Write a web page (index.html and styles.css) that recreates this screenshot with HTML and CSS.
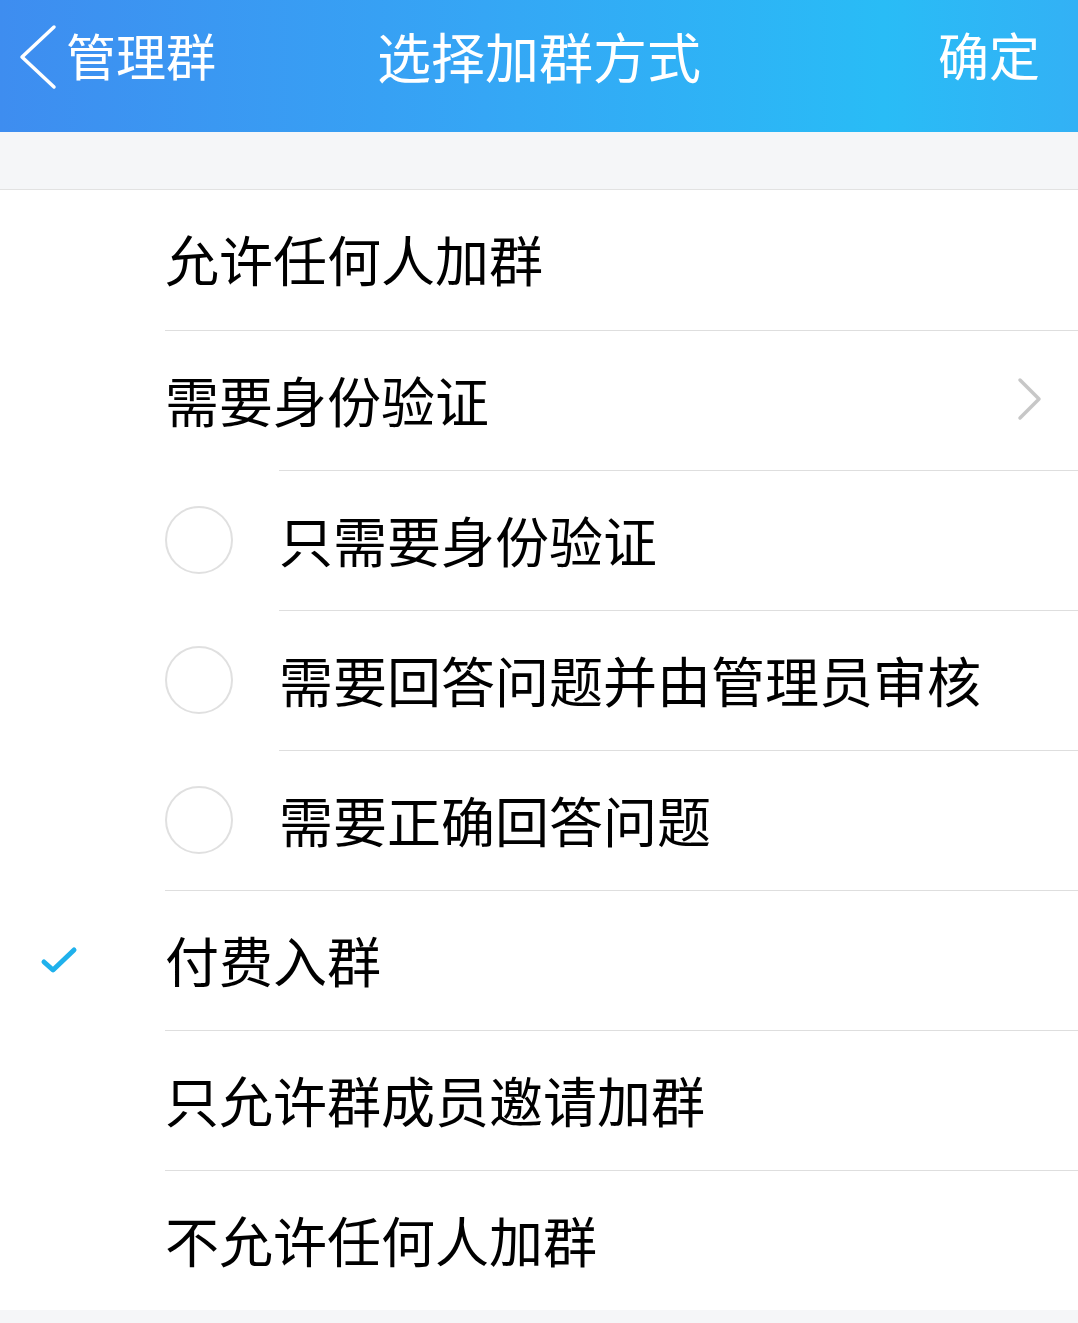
FILE: index.html
```html
<html lang="zh-CN">
<head>
    <meta charset="UTF-8">
    <title>选择加群方式</title>
    <link rel="stylesheet" href="styles.css">
</head>
<body>
<div id="app">
    <div class="topbar">
        <div class="back">
            <svg class="back-icon" width="40" height="66" viewBox="0 0 40 66">
                <polyline points="36,3 4,33 36,63" fill="none" stroke="#fff" stroke-width="3.5" stroke-linecap="round" stroke-linejoin="round"/>
            </svg>
            <span>管理群</span>
        </div>
        <div class="title">选择加群方式</div>
        <div class="confirm">确定</div>
    </div>

    <div class="spacer"></div>

    <div class="list">
        <div class="row">
            <div class="gutter"></div>
            <div class="body first">允许任何人加群</div>
        </div>
        <div class="row">
            <div class="gutter"></div>
            <div class="body">
                <span>需要身份验证</span>
                <svg class="chevron" width="28" height="46" viewBox="0 0 28 46">
                    <polyline points="4,4 23,23 4,42" fill="none" stroke="#c7c7c7" stroke-width="3.5" stroke-linecap="round" stroke-linejoin="round"/>
                </svg>
            </div>
        </div>
        <div class="row sub">
            <div class="gutter"></div>
            <div class="radio-cell"><span class="radio"></span></div>
            <div class="body">只需要身份验证</div>
        </div>
        <div class="row sub">
            <div class="gutter"></div>
            <div class="radio-cell"><span class="radio"></span></div>
            <div class="body">需要回答问题并由管理员审核</div>
        </div>
        <div class="row sub">
            <div class="gutter"></div>
            <div class="radio-cell"><span class="radio"></span></div>
            <div class="body">需要正确回答问题</div>
        </div>
        <div class="row">
            <div class="gutter">
                <svg class="check" width="40" height="32" viewBox="0 0 40 32">
                    <polyline points="5,18 14,26 35,6" fill="none" stroke="#1fb1ec" stroke-width="5" stroke-linecap="round" stroke-linejoin="round"/>
                </svg>
            </div>
            <div class="body">付费入群</div>
        </div>
        <div class="row">
            <div class="gutter"></div>
            <div class="body">只允许群成员邀请加群</div>
        </div>
        <div class="row">
            <div class="gutter"></div>
            <div class="body">不允许任何人加群</div>
        </div>
    </div>

    <div class="footer"></div>
</div>
</body>
</html>
```

FILE: styles.css
```css
body {
    margin: 0;
    padding: 0;
    font-family: "Noto Sans CJK SC", "Noto Sans", sans-serif;
    background: #ffffff;
}

.topbar {
    height: 132px;
    box-sizing: border-box;
    padding: 0 38px 20px 18px;
    display: flex;
    align-items: center;
    justify-content: space-between;
    position: relative;
    color: #ffffff;
    background: linear-gradient(90deg, #3e8df0 0%, #35a6f5 45%, #29bcf6 82%, #33b1f5 100%);
}

.back {
    display: flex;
    align-items: center;
    gap: 8px;
    font-size: 50px;
}

.back-icon {
    display: block;
    margin-top: 2px;
}

.back span {
    margin-top: -4px;
}

.title {
    position: absolute;
    left: 0;
    right: 0;
    top: 0;
    height: 110px;
    display: flex;
    align-items: center;
    justify-content: center;
    font-size: 54px;
    pointer-events: none;
}

.confirm {
    font-size: 51px;
    margin-top: -4px;
}

.spacer {
    height: 57px;
    background: #f5f6f8;
    border-bottom: 1px solid #e2e2e2;
}

.list {
    background: #ffffff;
}

.row {
    display: flex;
    height: 140px;
}

.gutter {
    width: 165px;
    flex: none;
    display: flex;
    align-items: center;
    padding-left: 39px;
    box-sizing: border-box;
}

.check {
    display: block;
}

.radio-cell {
    width: 114px;
    flex: none;
    display: flex;
    align-items: center;
}

.radio {
    width: 64px;
    height: 64px;
    border: 2px solid #e0e0e0;
    border-radius: 50%;
}

.body {
    flex: 1;
    display: flex;
    align-items: center;
    justify-content: space-between;
    padding-right: 34px;
    padding-bottom: 3px;
    border-top: 1px solid #dedede;
    font-size: 54px;
    color: #000000;
}

.body.first {
    border-top: none;
}

.chevron {
    display: block;
}

.footer {
    height: 13px;
    background: #f5f6f8;
}
```
